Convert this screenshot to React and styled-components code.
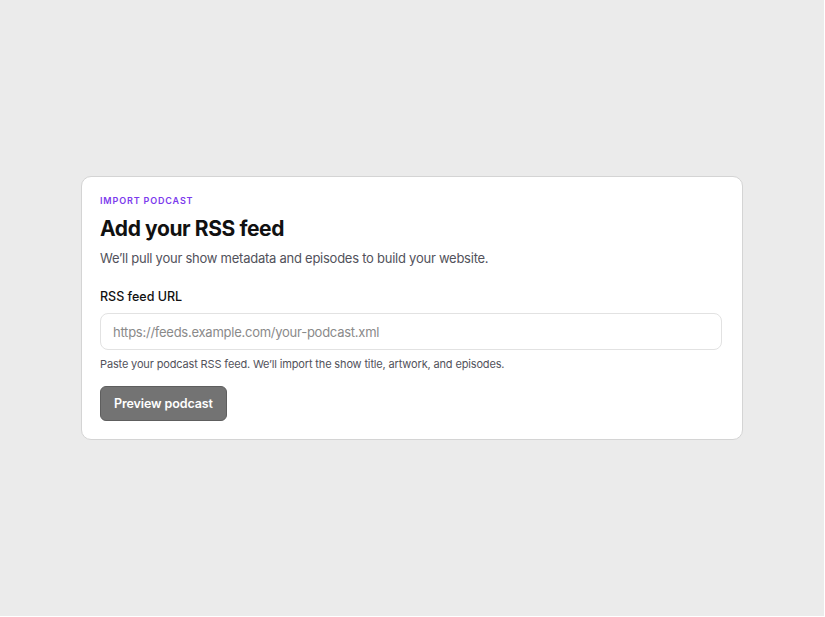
import React from 'react';
import styled, { createGlobalStyle } from 'styled-components';

const GlobalStyle = createGlobalStyle`
  html, body {
    margin: 0;
    padding: 0;
    background: #ffffff;
  }
  body {
    font-family: Inter, 'Noto Sans', sans-serif;
    -webkit-font-smoothing: antialiased;
  }
`;

const Page = styled.main`
  width: 824px;
  height: 616px;
  background: #ebebeb;
  display: flex;
  align-items: center;
  justify-content: center;
`;

const Card = styled.section`
  box-sizing: border-box;
  width: 662px;
  padding: 18px 20px 18px 18px;
  background: #ffffff;
  border: 1px solid #d4d4d4;
  border-radius: 10px;
  display: flex;
  flex-direction: column;
  align-items: flex-start;
`;

const Eyebrow = styled.div`
  font-size: 9px;
  line-height: 12px;
  font-weight: 600;
  letter-spacing: 0.85px;
  text-transform: uppercase;
  color: #7c3aed;
`;

const Title = styled.h1`
  margin: 8px 0 0;
  font-size: 21px;
  line-height: 28px;
  font-weight: 700;
  letter-spacing: -0.4px;
  color: #111111;
`;

const Subtitle = styled.p`
  margin: 5px 0 0;
  font-size: 13px;
  line-height: 20px;
  letter-spacing: -0.25px;
  color: #52525b;
`;

const Field = styled.div`
  margin-top: 19px;
  width: 100%;
  display: flex;
  flex-direction: column;
`;

const Label = styled.label`
  font-size: 12.5px;
  line-height: 20px;
  font-weight: 500;
  color: #111111;
`;

const Input = styled.input`
  box-sizing: border-box;
  margin-top: 6px;
  width: 100%;
  height: 37px;
  padding: 0 12px;
  border: 1px solid #e2e2e2;
  border-radius: 8px;
  font-family: inherit;
  font-size: 13px;
  letter-spacing: -0.25px;
  color: #111111;
  background: #ffffff;
  outline: none;

  &::placeholder {
    color: #8a8a8a;
  }
`;

const Help = styled.p`
  margin: 6px 0 0;
  font-size: 11px;
  line-height: 16px;
  letter-spacing: -0.15px;
  color: #52525b;
`;

const Button = styled.button`
  box-sizing: border-box;
  margin-top: 14px;
  height: 35px;
  padding: 0 13px;
  border: 1px solid #5e5e5e;
  border-radius: 6px;
  background: #737373;
  color: #ffffff;
  font-family: inherit;
  font-size: 12.5px;
  font-weight: 600;
  letter-spacing: -0.1px;
  cursor: pointer;
`;

export default function App() {
  return (
    <>
      <GlobalStyle />
      <Page>
        <Card>
          <Eyebrow>Import podcast</Eyebrow>
          <Title>Add your RSS feed</Title>
          <Subtitle>We’ll pull your show metadata and episodes to build your website.</Subtitle>
          <Field>
            <Label htmlFor="rss">RSS feed URL</Label>
            <Input id="rss" type="url" placeholder="https://feeds.example.com/your-podcast.xml" />
            <Help>Paste your podcast RSS feed. We’ll import the show title, artwork, and episodes.</Help>
          </Field>
          <Button type="button">Preview podcast</Button>
        </Card>
      </Page>
    </>
  );
}
